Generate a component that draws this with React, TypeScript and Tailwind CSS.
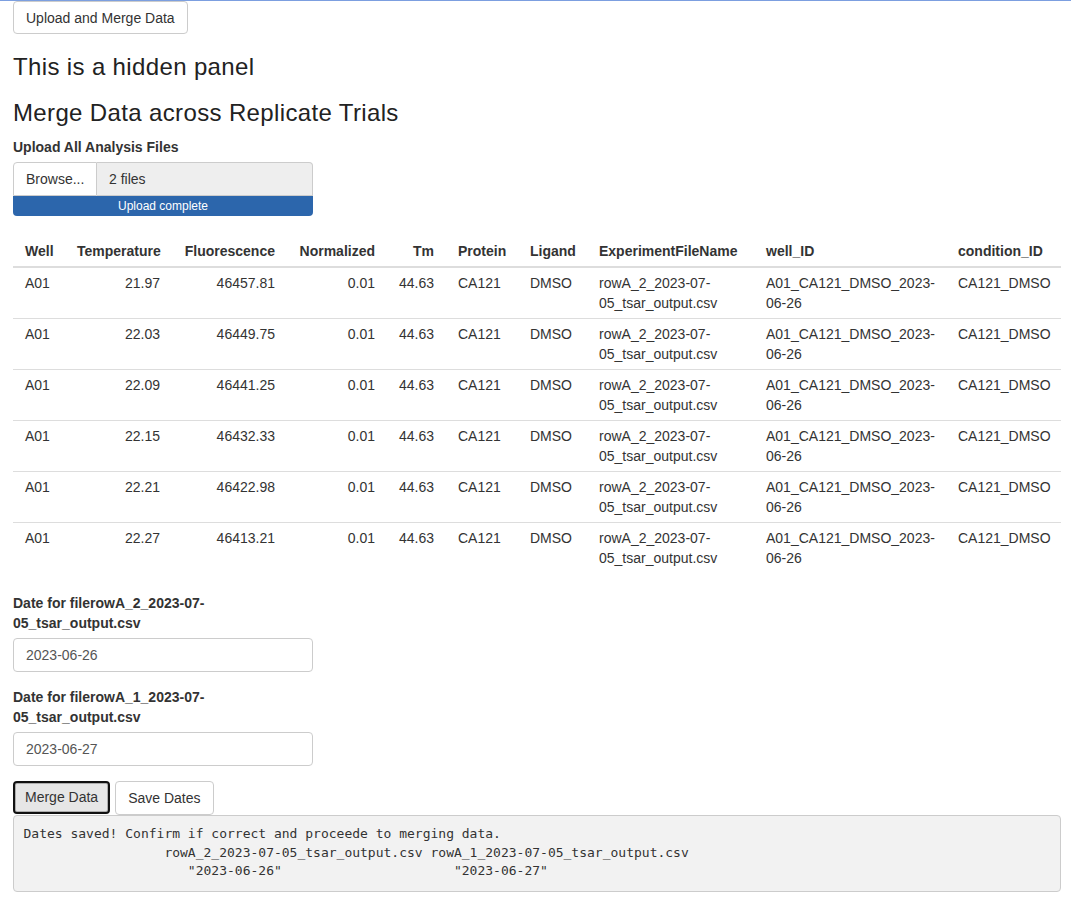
import React from 'react';

type Row = {
  well: string;
  temp: string;
  fluor: string;
  norm: string;
  tm: string;
  protein: string;
  ligand: string;
  file: string;
  wellId: string;
  condId: string;
};

const temps = ['21.97', '22.03', '22.09', '22.15', '22.21', '22.27'];
const fluors = ['46457.81', '46449.75', '46441.25', '46432.33', '46422.98', '46413.21'];

const rows: Row[] = temps.map((t, i) => ({
  well: 'A01',
  temp: t,
  fluor: fluors[i],
  norm: '0.01',
  tm: '44.63',
  protein: 'CA121',
  ligand: 'DMSO',
  file: 'rowA_2_2023-07-05_tsar_output.csv',
  wellId: 'A01_CA121_DMSO_2023-06-26',
  condId: 'CA121_DMSO',
}));

const dates = [
  { file: 'rowA_2_2023-07-05_tsar_output.csv', value: '2023-06-26' },
  { file: 'rowA_1_2023-07-05_tsar_output.csv', value: '2023-06-27' },
];

const output = [
  'Dates saved! Confirm if correct and proceede to merging data.',
  ' '.repeat(18) + 'rowA_2_2023-07-05_tsar_output.csv rowA_1_2023-07-05_tsar_output.csv',
  ' '.repeat(21) + '"2023-06-26"' + ' '.repeat(22) + '"2023-06-27"',
].join('\n');

function DateInput({ file, value }: { file: string; value: string }) {
  return (
    <div className="mb-[15px] w-[300px]">
      <label className="block mb-[5px] font-bold leading-5">Date for file{file}</label>
      <input
        readOnly
        value={value}
        className="block w-[300px] h-[34px] px-3 border border-[#ccc] rounded-[4px] text-[14px] text-[#555] bg-white outline-none"
      />
    </div>
  );
}

export default function App() {
  const th = 'px-3 pt-[5px] pb-[5px] font-bold align-top border-b-2 border-[#ddd]';
  const td = 'px-3 py-[5px] align-top border-t border-[#ddd]';

  return (
    <div className="min-h-screen bg-white text-[#333] text-[14px] leading-5 font-['Liberation_Sans',Arial,sans-serif]">
      <div className="h-px bg-[#7c9fe0]" />
      <div className="px-[13px]">
        <button className="h-[33px] px-3 border border-[#ccc] rounded-[4px] bg-white text-[14px]">
          Upload and Merge Data
        </button>

        <h3 className="mt-5 text-[24px] leading-[26.4px] font-medium tracking-[0.36px] text-[#222]">
          This is a hidden panel
        </h3>
        <h3 className="mt-5 mb-[10px] text-[24px] leading-[26.4px] font-medium tracking-[0.36px] text-[#222]">
          Merge Data across Replicate Trials
        </h3>

        <label className="block mb-[5px] font-bold">Upload All Analysis Files</label>
        <div className="w-[300px]">
          <div className="flex h-[34px]">
            <span className="flex items-center w-[84px] px-3 border border-[#ccc] rounded-tl-[4px] bg-white">
              Browse...
            </span>
            <span className="flex flex-1 items-center px-3 border border-l-0 border-[#ccc] rounded-tr-[4px] bg-[#eee]">
              2 files
            </span>
          </div>
          <div className="h-5 rounded-b-[4px] bg-[#2c66ac] text-white text-[12px] leading-5 text-center">
            Upload complete
          </div>
        </div>

        <table className="mt-5 table-fixed w-[1048px] border-collapse">
          <colgroup>
            <col className="w-[52px]" />
            <col className="w-[107px]" />
            <col className="w-[115px]" />
            <col className="w-[100px]" />
            <col className="w-[59px]" />
            <col className="w-[72px]" />
            <col className="w-[69px]" />
            <col className="w-[167px]" />
            <col className="w-[192px]" />
            <col className="w-[115px]" />
          </colgroup>
          <thead>
            <tr>
              <th className={`${th} text-left`}>Well</th>
              <th className={`${th} text-right`}>Temperature</th>
              <th className={`${th} text-right`}>Fluorescence</th>
              <th className={`${th} text-right`}>Normalized</th>
              <th className={`${th} text-right`}>Tm</th>
              <th className={`${th} text-left`}>Protein</th>
              <th className={`${th} text-left`}>Ligand</th>
              <th className={`${th} text-left`}>ExperimentFileName</th>
              <th className={`${th} text-left`}>well_ID</th>
              <th className={`${th} text-left`}>condition_ID</th>
            </tr>
          </thead>
          <tbody>
            {rows.map((r, i) => (
              <tr key={i} className={i === 0 ? '[&>td]:border-t-0' : ''}>
                <td className={`${td} text-left`}>{r.well}</td>
                <td className={`${td} text-right`}>{r.temp}</td>
                <td className={`${td} text-right`}>{r.fluor}</td>
                <td className={`${td} text-right`}>{r.norm}</td>
                <td className={`${td} text-right`}>{r.tm}</td>
                <td className={`${td} text-left`}>{r.protein}</td>
                <td className={`${td} text-left`}>{r.ligand}</td>
                <td className={`${td} text-left`}>{r.file}</td>
                <td className={`${td} text-left`}>{r.wellId}</td>
                <td className={`${td} text-left`}>{r.condId}</td>
              </tr>
            ))}
          </tbody>
        </table>

        <div className="mt-5">
          {dates.map((d) => (
            <DateInput key={d.file} file={d.file} value={d.value} />
          ))}
        </div>

        <div className="flex gap-[5px]">
          <button className="h-[33px] px-[10px] border-2 border-[#111] rounded-[4px] bg-[#e6e6e6] text-[14px] shadow-[inset_0_0_0_1px_#adadad]">
            Merge Data
          </button>
          <button className="h-[34px] px-3 border border-[#ccc] rounded-[4px] bg-white text-[14px]">
            Save Dates
          </button>
        </div>

        <pre className="w-[1048px] p-[9.5px] border border-[#ccc] rounded-[4px] bg-[#f2f2f2] text-[#333] text-[13px] leading-[18.57px] font-['DejaVu_Sans_Mono',monospace] whitespace-pre">
          {output}
        </pre>
      </div>
    </div>
  );
}
